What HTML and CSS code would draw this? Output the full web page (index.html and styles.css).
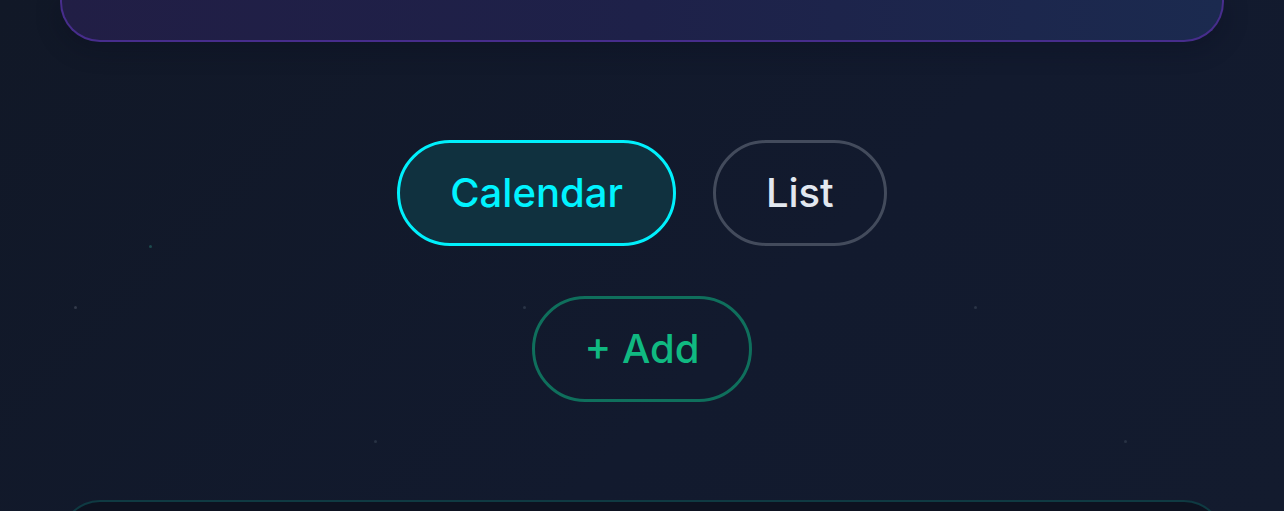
FILE: index.html
```html
<!DOCTYPE html>
<html lang="en">
<head>
<meta charset="utf-8">
<title>Schedule</title>
<link rel="stylesheet" href="styles.css">
</head>
<body>
<div class="page">
  <span class="star s1"></span>
  <span class="star s2"></span>
  <span class="star s3"></span>
  <span class="star s4"></span>
  <span class="star s5"></span>
  <span class="star s6"></span>
  <div class="hero-card"></div>
  <div class="controls">
    <div class="view-toggle">
      <button class="pill pill-active">Calendar</button>
      <button class="pill pill-muted">List</button>
    </div>
    <button class="pill pill-add">+ Add</button>
  </div>
  <div class="content-card"></div>
</div>
</body>
</html>
```

FILE: styles.css
```css
html, body {
  margin: 0;
  padding: 0;
  height: 100%;
  overflow: hidden;
}

body {
  background: linear-gradient(135deg, #111827 0%, #121a2e 60%, #131b2e 100%);
  font-family: Inter, "Noto Sans", "Liberation Sans", sans-serif;
}

.page {
  position: relative;
  height: 511px;
  overflow: hidden;
  padding: 0 60px;
}

.hero-card {
  height: 40px;
  border: 2px solid #472d8c;
  border-top: none;
  border-radius: 0 0 40px 40px;
  background: linear-gradient(90deg, #211e45 0%, #1e2149 50%, #1b2a4f 100%);
  box-shadow: 0 6px 24px rgba(10, 12, 30, 0.35);
}

.controls {
  display: flex;
  flex-direction: column;
  align-items: center;
  gap: 50px;
  padding-top: 98px;
}

.view-toggle {
  display: flex;
  gap: 37px;
}

.pill {
  font-family: inherit;
  font-size: 40px;
  font-weight: 500;
  line-height: 60px;
  padding: 20px 50px;
  border-radius: 999px;
  border: 3px solid;
  background: transparent;
  cursor: pointer;
}

.pill-active {
  color: #00f3ff;
  border-color: #00f0fc;
  background: #10313f;
}

.pill-muted {
  color: #e2e8f0;
  border-color: #434b5c;
}

.pill-add {
  color: #10b981;
  border-color: #0f6f5c;
}

.content-card {
  margin-top: 98px;
  height: 200px;
  border: 2px solid #0f3a42;
  border-bottom: none;
  border-radius: 40px 40px 0 0;
  background: #0d1220;
}

.star {
  position: absolute;
  width: 3px;
  height: 3px;
  border-radius: 50%;
  background: #2a3a4a;
}

.s1 { left: 149px; top: 245px; background: #1d4a4e; }
.s2 { left: 74px; top: 306px; background: #323a4a; }
.s3 { left: 523px; top: 306px; background: #2a3446; }
.s4 { left: 974px; top: 306px; background: #2a3446; }
.s5 { left: 374px; top: 440px; background: #283244; }
.s6 { left: 1124px; top: 440px; background: #283244; }
```
